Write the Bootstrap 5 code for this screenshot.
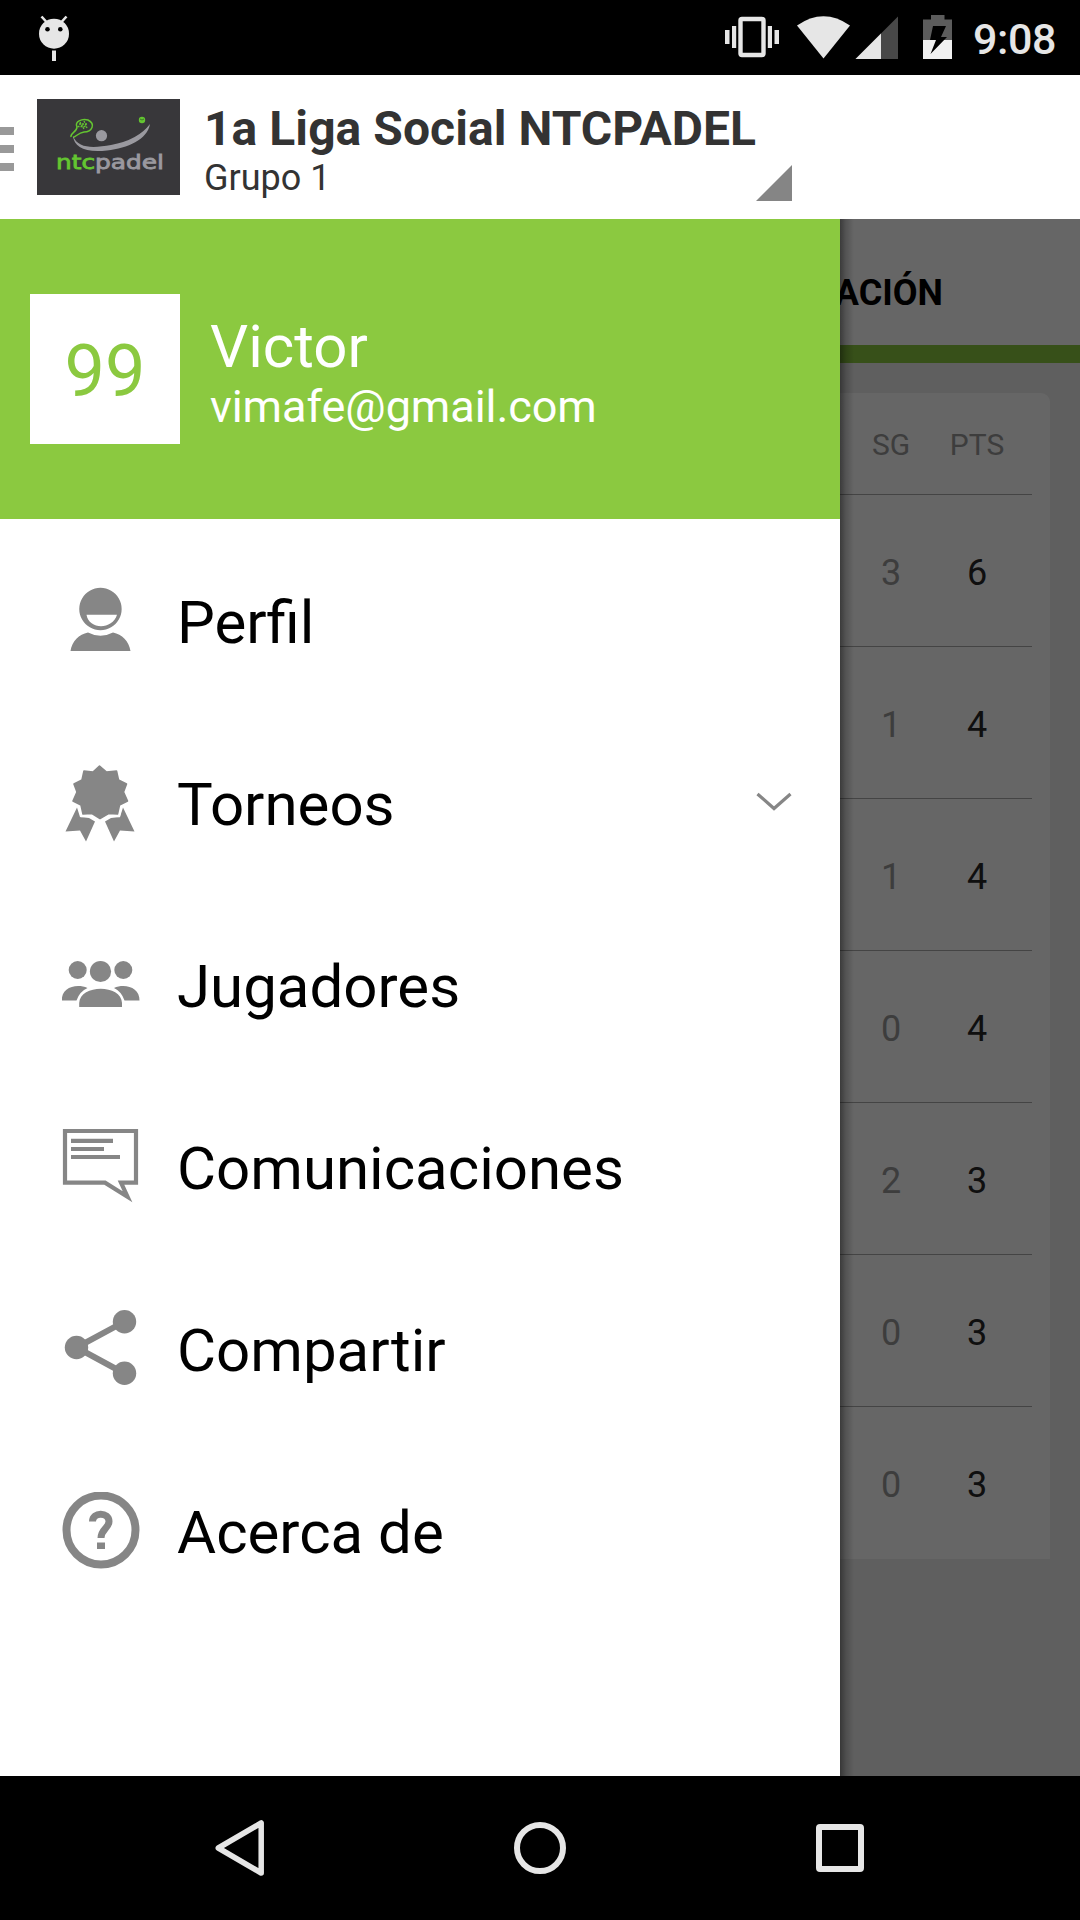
<!DOCTYPE html>
<html lang="es">
<head>
<meta charset="utf-8">
<meta name="viewport" content="width=device-width, initial-scale=1">
<title>NTCPADEL</title>
<link href="https://cdn.jsdelivr.net/npm/bootstrap@5.3.0/dist/css/bootstrap.min.css" rel="stylesheet">
<style>
  body { font-family: Roboto, "Liberation Sans", sans-serif; width: 1080px; height: 1920px; overflow: hidden; background: #000; line-height: 1.172; }
  svg { display: block; flex: none; }
  .status-bar { height: 75px; background: #000; }
  .clock { font-size: 43px; font-weight: 500; color: #e6e6e6; width: 120px; padding: 3px 0 0 13px; letter-spacing: -.4px; }
  .app-bar { height: 144px; color: #333; }
  .burger { width: 14px; gap: 10px; padding-top: 3px; }
  .burger span { height: 8px; background: #999; }
  .club-logo { margin-left: 23px; }
  .spinner { width: 588px; margin-left: 24px; height: 111px; padding-top: 9px; }
  .spinner svg { margin-bottom: 2px; }
  .league { font-size: 48px; font-weight: 700; line-height: 56px; white-space: nowrap; letter-spacing: .06px; }
  .group-name { font-size: 36px; line-height: 42px; }
  .stage { height: 1557px; }
  .drawer { width: 840px; }
  .account { height: 300px; background: #8bc940; padding-left: 30px; }
  .score { width: 150px; height: 150px; font-size: 72px; color: #8bc940; padding-top: 7px; }
  .who { margin-left: 30px; padding-top: 6px; }
  .who-name { font-size: 60px; line-height: 70px; }
  .who-mail { font-size: 45px; line-height: 53px; margin-top: -2px; letter-spacing: -.06px; }
  .menu-list { padding-top: 13px; }
  .menu-entry { height: 182px; padding: 0 48px 0 60px; font-size: 60px; color: #000; }
  .menu-entry svg { margin-bottom: 3px; }
  .menu-entry .caption-text { margin-left: 37px; }
  .pane { background: #ededed; }
  .pane-tab { height: 144px; background: #fff; border-bottom: 18px solid #8bc940; font-size: 36px; font-weight: 700; color: #000; padding: 22px 137px 0 0; white-space: nowrap; }
  .standings { margin: 30px 30px 0 0; background: #fff; border-radius: 0 9px 0 0; padding-right: 18px; }
  .srow { height: 152px; border-bottom: 1px solid #aaa; padding-right: 12px; font-size: 36px; padding-top: 6px; }
  .srow.head { height: 102px; font-size: 30px; padding-top: 2px; }
  .srow:last-child { border-bottom-color: transparent; }
  .srow span { width: 86px; text-align: center; color: #999; }
  .srow .pts { color: #262626; }
  .srow.head .pts { color: #999; }
  .scrim { background: linear-gradient(90deg, rgba(0,0,0,.42), rgba(0,0,0,.18) 6px, rgba(0,0,0,0) 14px), rgba(0,0,0,.6); }
  .nav-keys { height: 144px; background: #000; padding: 0 210px; }
</style>
<script src="https://cdn.jsdelivr.net/npm/bootstrap@5.3.0/dist/js/bootstrap.bundle.min.js"></script>
</head>
<body>
<div class="status-bar d-flex align-items-center">
  <svg width="100" height="75" viewBox="0 0 100 75" fill="#e6e6e6"><path d="M41.500 16.500l5 5.500M66.500 16.500l-5 5.500" stroke="#e6e6e6" stroke-width="2.600"/><circle cx="54" cy="33.700" r="15"/><rect x="52" y="50.500" width="4" height="10.500"/><g fill="#000"><circle cx="47.500" cy="29.300" r="2.300"/><circle cx="60.300" cy="29.300" r="2.300"/></g></svg>
  <svg class="ms-auto" width="240" height="75" viewBox="720 0 240 75" fill="#e6e6e6">
    <path d="M725 30h4.500v14H725zM732 26h4.200v22H732zM767.800 26h4.200v22h-4.200zM774.500 30h4.500v14h-4.500z"/>
    <rect x="740.500" y="19" width="23" height="36" rx="1.500" fill="none" stroke="#e6e6e6" stroke-width="4.400"/>
    <path d="M797 25.500Q823.500 7 850 25.500L823.500 58.500z"/>
    <path d="M898 16.500V59h-42.500z" fill="#484848"/><path d="M881 33.500V59h-25.500z"/>
    <path d="M931 15h13.500v4.500h7.500V41h-29V19.500h8z" fill="#5c5c5c"/><path d="M923 40h29v19h-29z" fill="#f0f0f0"/>
    <path d="M933 26h13l-5 11h6l-16.500 17 5.500-14h-6z" fill="#000"/>
  </svg>
  <div class="clock">9:08</div>
</div>
<header class="app-bar d-flex align-items-center bg-white">
  <div class="burger d-flex flex-column"><span></span><span></span><span></span></div>
  <svg class="club-logo" width="143" height="96" viewBox="37 99 143 96">
    <path fill="#38373a" d="M37 99h143v96H37z"/>
    <path d="M71 137C70 133 77 132 77 127C74 122 82 118 88 120C96 124 92 132 84 132C78 133 77 136 73 137.500" fill="none" stroke="#64c531" stroke-width="1.500"/>
    <path d="M79 124h8M77.500 126.500h9M80 122l4 7M84 121l3 7" stroke="#64c531" stroke-width="1.300" stroke-dasharray="2 1"/>
    <circle cx="142" cy="120" r="3.200" fill="#64c531"/><path d="M140 119q2 2 4 0" stroke="#397d25" fill="none"/>
    <circle cx="101.500" cy="135.700" r="5.600" fill="#9a999f"/>
    <path d="M73 136C78 149 94 148 111 145Q138 140 150 124C147 140 128 148 107 150.500C85 153 74 147 73 136z" fill="#9a999f"/>
    <g font-family="DejaVu Sans" font-size="20" stroke-width=".8"><text x="56" y="168.500" textLength="39" lengthAdjust="spacingAndGlyphs" fill="#64c531" stroke="#64c531">ntc</text><text x="95" y="168.500" textLength="69" lengthAdjust="spacingAndGlyphs" fill="#9a999f" stroke="#9a999f">padel</text></g>
  </svg>
  <div class="spinner d-flex">
    <div class="flex-shrink-0"><div class="league">1a Liga Social NTCPADEL</div><div class="group-name">Grupo 1</div></div>
    <svg class="ms-auto align-self-end" width="36" height="36" viewBox="0 0 36 36"><path fill="#858585" d="M36 0v36H0z"/></svg>
  </div>
</header>
<main class="stage d-flex">
  <nav class="drawer bg-white flex-shrink-0">
    <div class="account d-flex align-items-center text-white">
      <div class="score bg-white d-flex align-items-center justify-content-center">99</div>
      <div class="who"><div class="who-name">Victor</div><div class="who-mail">vimafe@gmail.com</div></div>
    </div>
    <div class="menu-list">
      <div class="menu-entry d-flex align-items-center">
        <svg width="80" height="80" viewBox="60 582 80 80" fill="#868686"><path fill-rule="evenodd" d="M100.500 587.800a21.200 21.200 0 1 1-.1 0zM86.500 614.800C89 630 112.500 630 117 614.800z"/><path d="M70.500 651C72 641 79 634.500 88 632.500Q100.500 639 113 632.500C122 634.500 129 641 130.500 651z"/></svg>
        <span class="caption-text">Perfil</span>
      </div>
      <div class="menu-entry d-flex align-items-center">
        <svg width="80" height="80" viewBox="60 762.500 80 80" fill="#868686"><path d="M77 806l3 9.500 9 1 6 3.500-9 20-6-11-14.500 1zM123 806l-3 9.500-9 1-6 3.500 9 20 6-11 14.500 1z"/><path stroke="#fff" stroke-width="6" d="M99.500 764.500l7 6 10-1 2 9 8 4-3 8 4 9-8 4-2 9-9-.5-8.500 5-8-5-9 .5-2-9-8-4 4-9-3-8 8-4 2-9 9 1z"/><path stroke="#868686" stroke-width="1.600" stroke-linejoin="round" d="M99.500 764.500l7 6 10-1 2 9 8 4-3 8 4 9-8 4-2 9-9-.5-8.500 5-8-5-9 .5-2-9-8-4 4-9-3-8 8-4 2-9 9 1z"/></svg>
        <span class="caption-text">Torneos</span>
        <svg class="ms-auto" width="36" height="24" viewBox="756 791 36 24" fill="none" stroke="#868686" stroke-width="3.200"><path d="M757.500 793l16.500 14.500L790.500 793"/></svg>
      </div>
      <div class="menu-entry d-flex align-items-center">
        <svg width="80" height="80" viewBox="60 946 80 80" fill="#868686"><circle cx="77.700" cy="970" r="9"/><circle cx="123.300" cy="970" r="9"/><circle cx="100.500" cy="971.500" r="10.600"/><path d="M62 1000.500C61 988 76 983 87.500 988Q79.500 991.500 76.500 1000.500zM139.500 1000.500C140 988 125.500 983 114 988Q121.500 991.500 124.500 1000.500zM79.200 1007v-4C80 984 121.500 984 122 1003v4z"/></svg>
        <span class="caption-text">Jugadores</span>
      </div>
      <div class="menu-entry d-flex align-items-center">
        <svg width="80" height="80" viewBox="60 1128 80 80" fill="none" stroke="#868686" stroke-width="4.200"><path d="M65 1131h71v51.700h-15l6.500 14-22.500-14H65z"/><path d="M71 1140.800h42M71 1149h33M71 1157h49"/></svg>
        <span class="caption-text">Comunicaciones</span>
      </div>
      <div class="menu-entry d-flex align-items-center">
        <svg width="80" height="80" viewBox="60 1310 80 80" fill="#868686"><path d="M124.500 1321.700L76.500 1347.500l48 26" fill="none" stroke="#868686" stroke-width="6"/><circle cx="124.500" cy="1321.700" r="11.700"/><circle cx="76.500" cy="1347.500" r="11.700"/><circle cx="124.500" cy="1373.300" r="11.700"/></svg>
        <span class="caption-text">Compartir</span>
      </div>
      <div class="menu-entry d-flex align-items-center">
        <svg width="80" height="80" viewBox="60 1492 80 80"><circle cx="101" cy="1530" r="34.500" fill="none" stroke="#868686" stroke-width="8"/><path d="M92.500 1521.500C92.500 1511.500 109 1512 109 1521.500C109 1528 101 1529 101 1538" fill="none" stroke="#868686" stroke-width="7"/><path fill="#868686" d="M97 1542.500h8v6.500h-8z"/></svg>
        <span class="caption-text">Acerca de</span>
      </div>
    </div>
  </nav>
  <section class="pane flex-grow-1 position-relative overflow-hidden">
    <div class="pane-tab d-flex align-items-center justify-content-end">ACIÓN</div>
    <div class="standings">
      <div class="srow head d-flex align-items-center justify-content-end"><span>SG</span><span class="pts">PTS</span></div>
      <div class="srow d-flex align-items-center justify-content-end"><span>3</span><span class="pts">6</span></div>
      <div class="srow d-flex align-items-center justify-content-end"><span>1</span><span class="pts">4</span></div>
      <div class="srow d-flex align-items-center justify-content-end"><span>1</span><span class="pts">4</span></div>
      <div class="srow d-flex align-items-center justify-content-end"><span>0</span><span class="pts">4</span></div>
      <div class="srow d-flex align-items-center justify-content-end"><span>2</span><span class="pts">3</span></div>
      <div class="srow d-flex align-items-center justify-content-end"><span>0</span><span class="pts">3</span></div>
      <div class="srow d-flex align-items-center justify-content-end"><span>0</span><span class="pts">3</span></div>
    </div>
    <div class="scrim position-absolute top-0 start-0 w-100 h-100"></div>
  </section>
</main>
<footer class="nav-keys d-flex align-items-center justify-content-between">
  <svg width="60" height="60" viewBox="210 1818 60 60" fill="none" stroke="#e6e6e6" stroke-width="5.500" stroke-linejoin="round"><path d="M261.200 1823v50L218.300 1848z"/></svg>
  <svg width="60" height="60" viewBox="510 1818 60 60" fill="none" stroke="#e6e6e6" stroke-width="6"><circle cx="540" cy="1848" r="23"/></svg>
  <svg width="60" height="60" viewBox="810 1818 60 60" fill="none" stroke="#e6e6e6" stroke-width="6"><rect x="819" y="1827" width="42" height="42" rx="1"/></svg>
</footer>
</body>
</html>
